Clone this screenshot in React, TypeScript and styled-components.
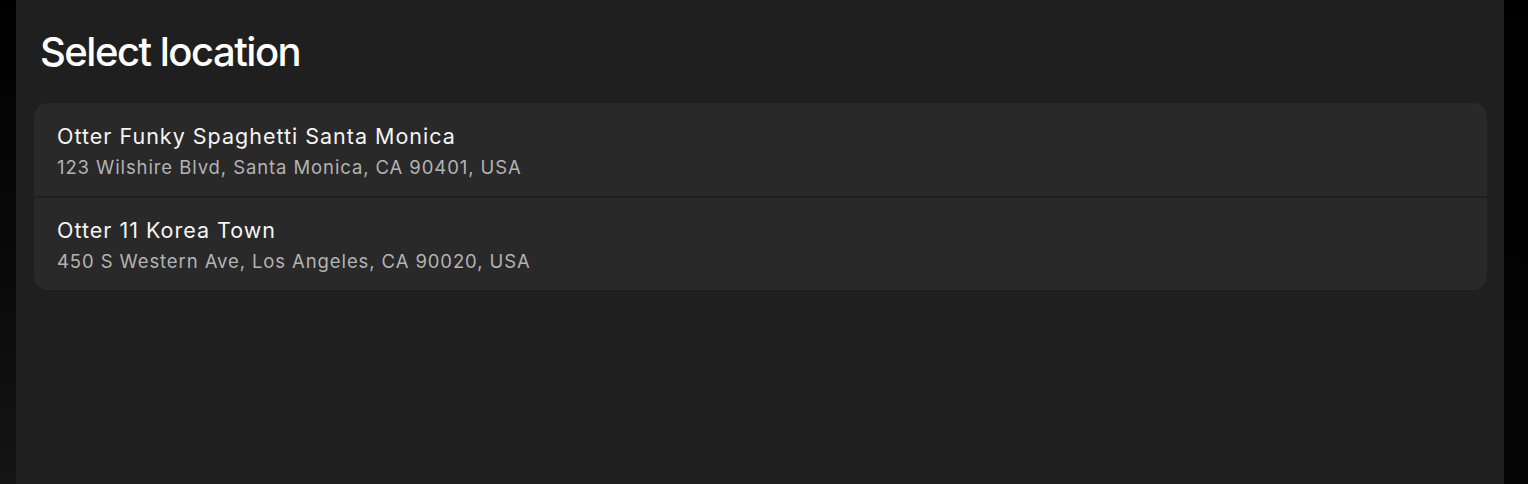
import React from "react";
import styled, { createGlobalStyle } from "styled-components";

const Global = createGlobalStyle`
  html, body { margin: 0; padding: 0; background: #000; }
  body { font-family: Inter, "Noto Sans", sans-serif; -webkit-font-smoothing: antialiased; }
`;

const Screen = styled.div`
  display: flex;
  width: 1528px;
  height: 484px;
  overflow: hidden;
  background: #000;
`;

const LeftEdge = styled.div`
  width: 16px;
  flex: none;
  background: linear-gradient(to bottom, #000 0%, #080808 50%, #141414 100%);
`;

const RightEdge = styled.div`
  width: 24px;
  flex: none;
  background: linear-gradient(to bottom, #000 0%, #050505 100%);
`;

const Panel = styled.main`
  flex: 1;
  background: #1f1f1f;
  padding: 28px 17px 0 18px;
  display: flex;
  flex-direction: column;
`;

const Title = styled.h1`
  margin: 0 0 27px 6px;
  font-size: 40px;
  line-height: 48px;
  font-weight: 500;
  color: #fff;
  letter-spacing: -1.5px;
`;

const List = styled.ul`
  list-style: none;
  margin: 0;
  padding: 0;
  background: #1f1f1f;
  border-radius: 14px;
  overflow: hidden;
  display: flex;
  flex-direction: column;
  gap: 2px;
`;

const Row = styled.li<{ $first?: boolean }>`
  background: #292929;
  padding: ${(p) => (p.$first ? "20px 23px 17px" : "19px 23px 17px")};
  display: flex;
  flex-direction: column;
  gap: 6px;
  cursor: pointer;
`;

const Name = styled.div`
  font-size: 21.5px;
  line-height: 26px;
  color: #f4f4f4;
  font-weight: 400;
  letter-spacing: 1px;
`;

const Address = styled.div`
  font-size: 18.5px;
  line-height: 24px;
  color: #b3b3b3;
  letter-spacing: 0.9px;
`;

const locations = [
  { name: "Otter Funky Spaghetti Santa Monica", address: "123 Wilshire Blvd, Santa Monica, CA 90401, USA" },
  { name: "Otter 11 Korea Town", address: "450 S Western Ave, Los Angeles, CA 90020, USA" },
];

export default function App() {
  return (
    <>
      <Global />
      <Screen>
        <LeftEdge />
        <Panel>
          <Title>Select location</Title>
          <List>
            {locations.map((l, i) => (
              <Row key={l.name} $first={i === 0}>
                <Name>{l.name}</Name>
                <Address>{l.address}</Address>
              </Row>
            ))}
          </List>
        </Panel>
        <RightEdge />
      </Screen>
    </>
  );
}
